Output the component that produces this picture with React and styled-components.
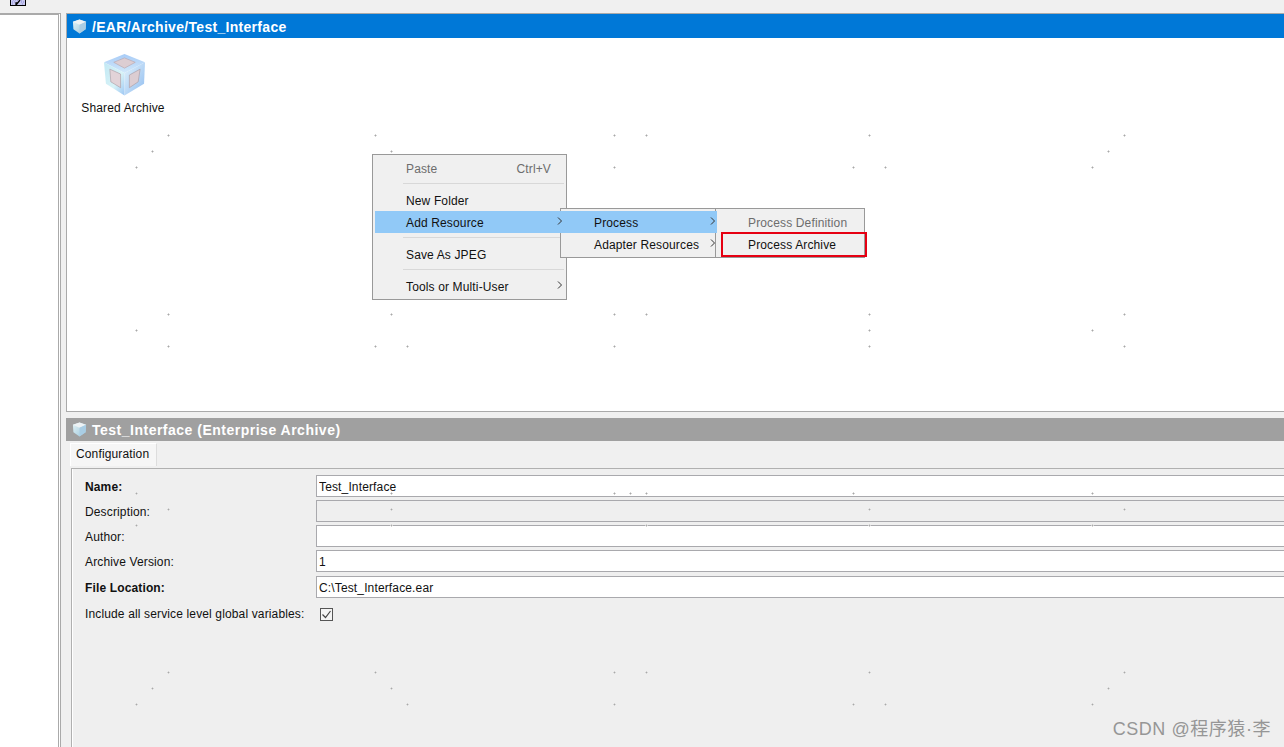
import React from "react"
import styled, { createGlobalStyle } from "styled-components"

const GlobalStyle = createGlobalStyle`
  html, body {
    margin: 0;
    padding: 0;
    background: #f0f0f0;
  }
  * {
    box-sizing: border-box;
  }
`

const Page = styled.div`
  position: relative;
  width: 1284px;
  height: 747px;
  overflow: hidden;
  background: #f0f0f0;
  font-family: "Liberation Sans", Arial, sans-serif;
  font-size: 12px;
  letter-spacing: 0.14px;
  color: #111;
`

const Toolbar = styled.div`
  height: 13px;
  padding-left: 10px;
`

const Body = styled.div`
  display: flex;
  height: 734px;
`

const Sidebar = styled.div`
  flex: 0 0 61px;
  background: #fff;
  border-top: 2px solid #aaa;
  border-right: 3px double #aaa;
`

const Main = styled.div`
  flex: 1;
  min-width: 0;
  margin-left: 5px;
  display: flex;
  flex-direction: column;
`

const CanvasPane = styled.section`
  height: 399px;
  display: flex;
  flex-direction: column;
  border-top: 1px solid #aaa;
  border-left: 1px solid #aaa;
  border-bottom: 1px solid #aaa;
`

const TitleBar = styled.div`
  display: flex;
  align-items: center;
  gap: 5px;
  height: ${(p) => p.$height}px;
  padding-left: ${(p) => p.$inset}px;
  background: ${(p) => p.$color};
  color: #fff;
  font-size: 14px;
  font-weight: 700;
`

const TitleText = styled.span`
  padding-top: ${(p) => p.$drop}px;
  letter-spacing: ${(p) => p.$tracking}px;
  white-space: nowrap;
`

const Canvas = styled.div`
  flex: 1;
  background: #fff;
  padding: 15px 0 0 15px;
`

const Shortcut = styled.div`
  display: inline-flex;
  flex-direction: column;
  align-items: center;
  width: 82px;
  gap: 4px;
  line-height: 14px;
  white-space: nowrap;
`

const CubeGlyph = styled.svg`
  display: block;
  margin-left: 3px;
`

const PropsPane = styled.section`
  flex: 1;
  min-height: 0;
  margin-top: 6px;
  display: flex;
  flex-direction: column;
`

const TabRow = styled.div`
  height: 27px;
  padding: 2px 0 0 4px;
`

const Tab = styled.div`
  display: flex;
  align-items: center;
  width: 87px;
  height: 23px;
  padding: 0 0 2px 5px;
  background: #f6f6f6;
  border-top: 1px solid #fff;
  border-left: 1px solid #fff;
  border-right: 1px solid #ddd;
`

const FormPanel = styled.div`
  flex: 1;
  margin-left: 5px;
  padding: 6px 0 0 13px;
  background: #efefef;
  border-top: 1px solid #b0b0b0;
  border-left: 1px solid #b0b0b0;
  box-shadow: inset 1px 0 0 #fff;
  display: flex;
  flex-direction: column;
  gap: 3px;
`

const FormRow = styled.div`
  display: grid;
  grid-template-columns: 231px 1fr;
  align-items: center;
  height: 22px;
  margin-top: ${(p) => p.$extra || 0}px;
`

const Label = styled.label`
  padding-top: 2px;
  font-weight: ${(p) => (p.$required ? 700 : 400)};
  white-space: nowrap;
`

const TextInput = styled.input`
  display: block;
  width: 100%;
  height: 22px;
  padding: 2px 0 0 2px;
  border: 1px solid #a9a9ad;
  border-right: 0;
  border-radius: 0;
  outline: none;
  background: ${(p) => (p.disabled ? "#efefef" : "#fff")};
  font: inherit;
  letter-spacing: inherit;
  color: #111;
`

const CheckBox = styled.span`
  display: block;
  width: 13px;
  height: 13px;
  margin: 2px 0 0 4px;
  background: #f4f4f4;
  border: 1px solid #555;
`

const MenuBox = styled.div`
  position: absolute;
  left: ${(p) => p.$left}px;
  top: ${(p) => p.$top}px;
  width: ${(p) => p.$width}px;
  z-index: ${(p) => p.$layer};
  padding: 2px;
  background: #f0f0f0;
  border: 1px solid #999;
`

const MenuRow = styled.div`
  position: relative;
  display: flex;
  align-items: center;
  justify-content: space-between;
  height: 22px;
  padding: 2px 13px 0 ${(p) => p.$indent}px;
  margin: 0 ${(p) => p.$bleedRight || 0}px 0 ${(p) => p.$bleedLeft || 0}px;
  background: ${(p) => (p.$active ? "#91c9f7" : "transparent")};
  color: ${(p) => (p.$disabled ? "#6d6d6d" : "#111")};
  white-space: nowrap;
`

const MenuRule = styled.div`
  height: 10px;
  margin-left: 28px;
  padding-top: 4px;
  &::before {
    content: "";
    display: block;
    height: 1px;
    background: #d8d8d8;
  }
`

const Chevron = styled.svg`
  position: absolute;
  right: ${(p) => p.$right}px;
  top: 6px;
  width: 6px;
  height: 8px;
`

const RedFrame = styled.div`
  position: absolute;
  left: 721px;
  top: 232px;
  width: 146px;
  height: 25px;
  z-index: 4;
  border: 2px solid #e60012;
`

const Specks = styled.svg`
  position: absolute;
  left: 0;
  top: 0;
  z-index: 1;
  pointer-events: none;
`

const Watermark = styled.div`
  position: absolute;
  right: 13px;
  bottom: 8px;
  z-index: 5;
  font-family: "Liberation Sans", "Noto Sans CJK SC", sans-serif;
  font-size: 18px;
  letter-spacing: 0.55px;
  line-height: 20px;
  color: #969696;
`

const speckRows = [
  [135, [168, 375, 614, 646, 869, 1124]],
  [151, [152, 391, 1108]],
  [167, [136, 614, 853, 885, 1092]],
  [314, [168, 391, 614, 646, 869, 1124]],
  [330, [136, 869, 1092]],
  [346, [168, 375, 407, 614, 869, 1124]],
  [493, [136, 391, 614, 630, 646, 853, 1092]],
  [509, [168, 391, 869, 1124]],
  [525, [136, 391, 646, 869, 1092]],
  [672, [168, 375, 614, 646, 869, 1124]],
  [688, [152, 391, 1108]],
  [704, [136, 407, 614, 853, 885, 1092]],
]

const fields = [
  { label: "Name:", value: "Test_Interface", required: true },
  { label: "Description:", value: "", disabled: true },
  { label: "Author:", value: "" },
  { label: "Archive Version:", value: "1" },
  { label: "File Location:", value: "C:\\Test_Interface.ear", required: true, extra: 1 },
]

const ToolIcon = () => (
  <svg width="16" height="6" viewBox="0 0 16 6" style={{ display: "block" }}>
    <rect x="0.5" y="-3" width="15" height="8.5" fill="#c9c9f0" stroke="#000" />
    <path d="M3 0h10M2 2h3M11 2h3M2 4h2M12 4h2" stroke="#8a8ad8" strokeDasharray="1 1" />
    <path d="M6 5L6 3L8 3M6 5L10 0" stroke="#000" strokeWidth="1.3" fill="none" />
  </svg>
)

const SmallCube = ({ id }) => (
  <svg width="15" height="15" viewBox="0 0 16 16" style={{ flex: "none" }}>
    <defs>
      <linearGradient id={id} x1="0" y1="0" x2="1" y2="1">
        <stop offset="0" stopColor="#e4f3f5" />
        <stop offset="1" stopColor="#9cc7dd" />
      </linearGradient>
    </defs>
    <path d="M8 0.5L15 3L14.5 11L8 15.5L1.5 11L1 3Z" fill={`url(#${id})`} />
    <path d="M8 0.5L15 3L8 6L1 3Z" fill="#eef3f5" />
    <path d="M8 6L15 3L14.5 11L8 15.5Z" fill="#a9cde4" />
  </svg>
)

const BigCube = () => (
  <CubeGlyph width="43" height="44" viewBox="0 0 44 44">
    <defs>
      <linearGradient id="cubeLeft" x1="0" y1="0" x2="1" y2="1">
        <stop offset="0" stopColor="#c2e8f4" />
        <stop offset="0.6" stopColor="#d8f3f7" />
        <stop offset="1" stopColor="#9cc6f4" />
      </linearGradient>
      <linearGradient id="cubeRight" x1="0" y1="0" x2="1" y2="1">
        <stop offset="0" stopColor="#e4f3fb" />
        <stop offset="1" stopColor="#8fbcf0" />
      </linearGradient>
      <linearGradient id="cubeTop" x1="0" y1="0" x2="0" y2="1">
        <stop offset="0" stopColor="#a8ccf7" />
        <stop offset="1" stopColor="#d2e8fa" />
      </linearGradient>
    </defs>
    <path d="M22 0.5L43 9L22 20L1 9Z" fill="url(#cubeTop)" />
    <path d="M1 9L22 20L22 43L3 31Z" fill="url(#cubeLeft)" />
    <path d="M43 9L22 20L22 43L42 31Z" fill="url(#cubeRight)" />
    <path d="M22 4.5L33 9L22 15L11 9Z" fill="#dccdd2" stroke="#b5a3aa" strokeWidth="0.6" />
    <path d="M7 16L18 21L18 35L8 29Z" fill="#e2d3d8" stroke="#a8979e" strokeWidth="0.6" />
    <path d="M38 16L27 22L27 35L36 29Z" fill="#dccdd2" stroke="#a8979e" strokeWidth="0.6" />
  </CubeGlyph>
)

const ArrowRight = ({ right }) => (
  <Chevron $right={right} viewBox="0 0 6 8">
    <path d="M1 0.5L4.5 4L1 7.5" fill="none" stroke="#333" strokeWidth="1" />
  </Chevron>
)

const CheckMark = () => (
  <svg width="11" height="11" viewBox="0 0 11 11" style={{ display: "block" }}>
    <path d="M1.5 5.5L4.5 8.5L9.5 2" fill="none" stroke="#444" strokeWidth="1.2" />
  </svg>
)

const App = () => {
  return (
    <Page>
      <GlobalStyle />
      <Toolbar>
        <ToolIcon />
      </Toolbar>
      <Body>
        <Sidebar />
        <Main>
          <CanvasPane>
            <TitleBar $height={24} $color="#0078d7" $inset={5}>
              <SmallCube id="cubeA" />
              <TitleText $drop={2} $tracking={0.3}>
                /EAR/Archive/Test_Interface
              </TitleText>
            </TitleBar>
            <Canvas>
              <Shortcut>
                <BigCube />
                Shared Archive
              </Shortcut>
            </Canvas>
          </CanvasPane>
          <PropsPane>
            <TitleBar $height={23} $color="#a0a0a0" $inset={6}>
              <SmallCube id="cubeB" />
              <TitleText $drop={0} $tracking={0.5}>
                Test_Interface (Enterprise Archive)
              </TitleText>
            </TitleBar>
            <TabRow>
              <Tab>Configuration</Tab>
            </TabRow>
            <FormPanel>
              {fields.map((item) => (
                <FormRow key={item.label} $extra={item.extra}>
                  <Label $required={item.required}>{item.label}</Label>
                  <TextInput readOnly value={item.value} disabled={item.disabled} />
                </FormRow>
              ))}
              <FormRow $extra={1}>
                <Label>Include all service level global variables:</Label>
                <CheckBox>
                  <CheckMark />
                </CheckBox>
              </FormRow>
            </FormPanel>
          </PropsPane>
        </Main>
      </Body>

      <Specks width="1284" height="747">
        {speckRows.map(([y, xs]) =>
          xs.map((x) => (
            <g key={`${x}-${y}`}>
              <path d={`M${x - 1} ${y}.5h3M${x}.5 ${y - 1}v3`} stroke="#d4d4d4" />
              <rect x={x} y={y} width="1" height="1" fill="#a8a8a8" />
            </g>
          ))
        )}
      </Specks>

      <MenuBox $left={372} $top={154} $width={195} $layer={2}>
        <MenuRow $indent={31} $disabled>
          Paste
          <span>Ctrl+V</span>
        </MenuRow>
        <MenuRule />
        <MenuRow $indent={31}>New Folder</MenuRow>
        <MenuRow $indent={31} $active>
          Add Resource
        </MenuRow>
        <MenuRule />
        <MenuRow $indent={31}>Save As JPEG</MenuRow>
        <MenuRule />
        <MenuRow $indent={31}>
          Tools or Multi-User
          <ArrowRight right={1} />
        </MenuRow>
      </MenuBox>

      <MenuBox $left={560} $top={208} $width={156} $layer={3}>
        <MenuRow $indent={34} $active $bleedLeft={-3} $bleedRight={-4}>
          <ArrowRight right={154} />
          Process
          <ArrowRight right={1} />
        </MenuRow>
        <MenuRow $indent={31}>
          Adapter Resources
          <ArrowRight right={-3} />
        </MenuRow>
      </MenuBox>

      <MenuBox $left={715} $top={208} $width={150} $layer={2}>
        <MenuRow $indent={30} $disabled>
          Process Definition
        </MenuRow>
        <MenuRow $indent={30}>Process Archive</MenuRow>
      </MenuBox>
      <RedFrame />

      <Watermark>CSDN @程序猿·李</Watermark>
    </Page>
  )
}

export default App
